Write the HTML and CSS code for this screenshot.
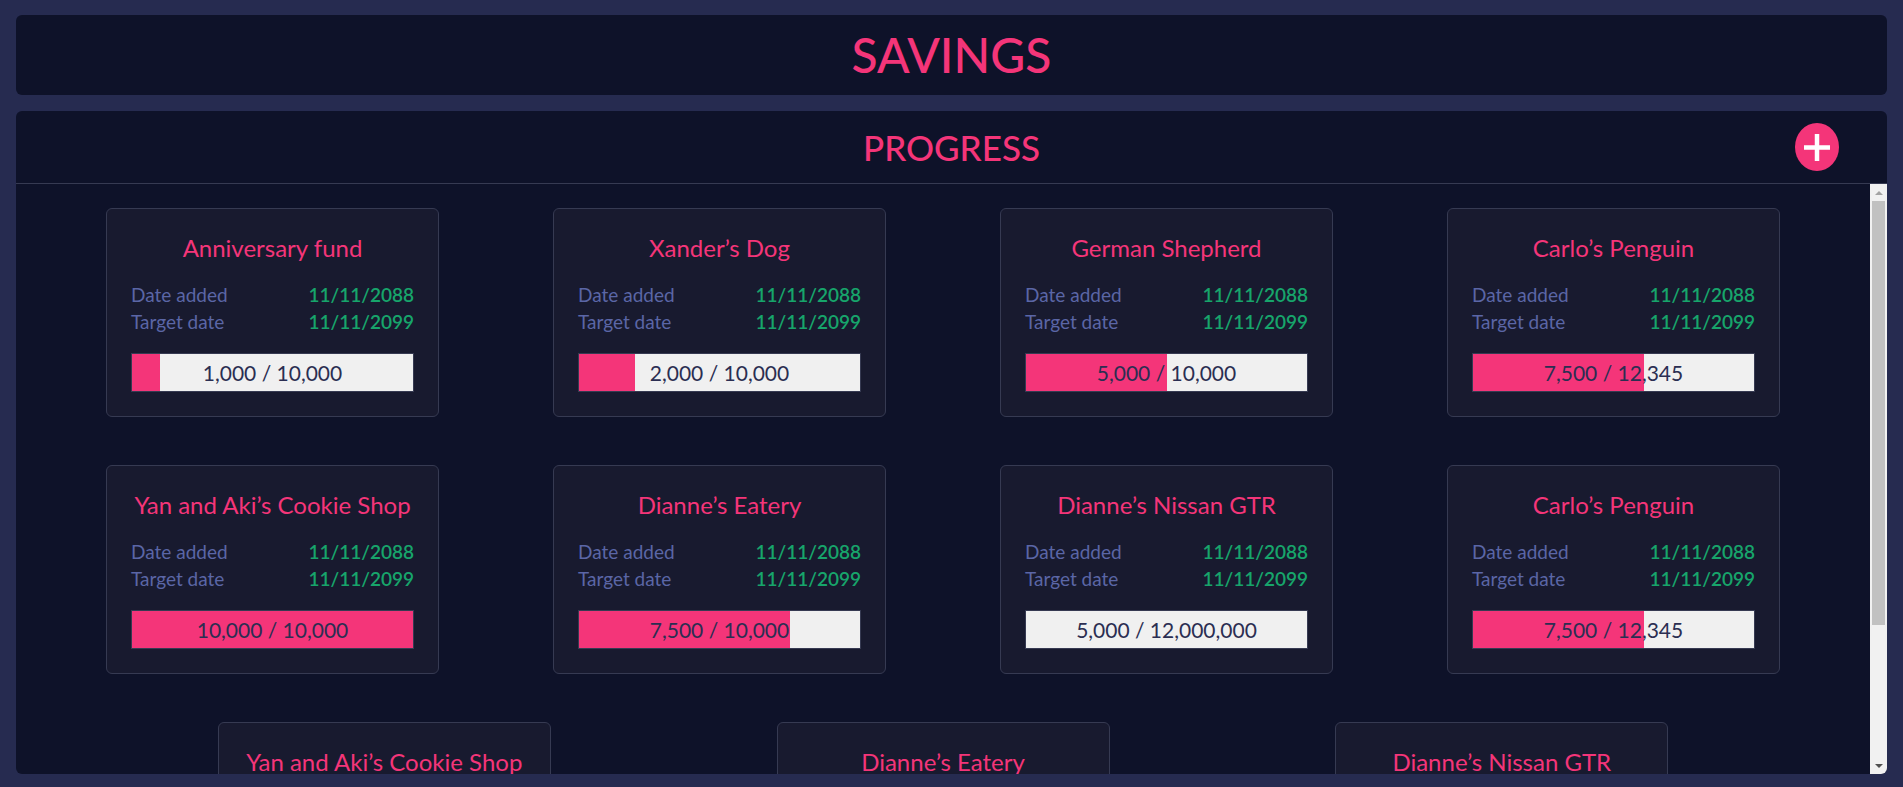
FILE: index.html
```html
<!DOCTYPE html>
<html lang="en">
<head>
<meta charset="utf-8">
<title>Savings</title>
<link rel="stylesheet" href="styles.css">
</head>
<body>
<div class="app">
  <header class="top">
    <h1 class="brand">SAVINGS</h1>
  </header>
  <section class="main">
    <div class="main-head">
      <h2 class="section-title">PROGRESS</h2>
      <button class="add" type="button" aria-label="Add">
        <svg width="26" height="27" viewBox="0 0 26 27"><path d="M13 0V27M0 13.5H26" stroke="#fff" stroke-width="4.5" fill="none"/></svg>
      </button>
    </div>
    <div class="main-body">
    <div class="scroll">
      <div class="cards">
        <div class="card">
          <h3 class="card-title">Anniversary fund</h3>
          <div class="row"><span class="label">Date added</span><span class="date">11/11/2088</span></div>
          <div class="row"><span class="label">Target date</span><span class="date">11/11/2099</span></div>
          <div class="bar"><div class="fill" style="width:10%"></div><div class="amount">1,000 / 10,000</div></div>
        </div>
        <div class="card">
          <h3 class="card-title">Xander’s Dog</h3>
          <div class="row"><span class="label">Date added</span><span class="date">11/11/2088</span></div>
          <div class="row"><span class="label">Target date</span><span class="date">11/11/2099</span></div>
          <div class="bar"><div class="fill" style="width:20%"></div><div class="amount">2,000 / 10,000</div></div>
        </div>
        <div class="card">
          <h3 class="card-title">German Shepherd</h3>
          <div class="row"><span class="label">Date added</span><span class="date">11/11/2088</span></div>
          <div class="row"><span class="label">Target date</span><span class="date">11/11/2099</span></div>
          <div class="bar"><div class="fill" style="width:50%"></div><div class="amount">5,000 / 10,000</div></div>
        </div>
        <div class="card">
          <h3 class="card-title">Carlo’s Penguin</h3>
          <div class="row"><span class="label">Date added</span><span class="date">11/11/2088</span></div>
          <div class="row"><span class="label">Target date</span><span class="date">11/11/2099</span></div>
          <div class="bar"><div class="fill" style="width:60.75%"></div><div class="amount">7,500 / 12,345</div></div>
        </div>
        <div class="card">
          <h3 class="card-title">Yan and Aki’s Cookie Shop</h3>
          <div class="row"><span class="label">Date added</span><span class="date">11/11/2088</span></div>
          <div class="row"><span class="label">Target date</span><span class="date">11/11/2099</span></div>
          <div class="bar"><div class="fill" style="width:100%"></div><div class="amount">10,000 / 10,000</div></div>
        </div>
        <div class="card">
          <h3 class="card-title">Dianne’s Eatery</h3>
          <div class="row"><span class="label">Date added</span><span class="date">11/11/2088</span></div>
          <div class="row"><span class="label">Target date</span><span class="date">11/11/2099</span></div>
          <div class="bar"><div class="fill" style="width:75%"></div><div class="amount">7,500 / 10,000</div></div>
        </div>
        <div class="card">
          <h3 class="card-title">Dianne’s Nissan GTR</h3>
          <div class="row"><span class="label">Date added</span><span class="date">11/11/2088</span></div>
          <div class="row"><span class="label">Target date</span><span class="date">11/11/2099</span></div>
          <div class="bar"><div class="fill" style="width:0%"></div><div class="amount">5,000 / 12,000,000</div></div>
        </div>
        <div class="card">
          <h3 class="card-title">Carlo’s Penguin</h3>
          <div class="row"><span class="label">Date added</span><span class="date">11/11/2088</span></div>
          <div class="row"><span class="label">Target date</span><span class="date">11/11/2099</span></div>
          <div class="bar"><div class="fill" style="width:60.75%"></div><div class="amount">7,500 / 12,345</div></div>
        </div>
        <div class="card">
          <h3 class="card-title">Yan and Aki’s Cookie Shop</h3>
          <div class="row"><span class="label">Date added</span><span class="date">11/11/2088</span></div>
          <div class="row"><span class="label">Target date</span><span class="date">11/11/2099</span></div>
          <div class="bar"><div class="fill" style="width:100%"></div><div class="amount">10,000 / 10,000</div></div>
        </div>
        <div class="card">
          <h3 class="card-title">Dianne’s Eatery</h3>
          <div class="row"><span class="label">Date added</span><span class="date">11/11/2088</span></div>
          <div class="row"><span class="label">Target date</span><span class="date">11/11/2099</span></div>
          <div class="bar"><div class="fill" style="width:75%"></div><div class="amount">7,500 / 10,000</div></div>
        </div>
        <div class="card">
          <h3 class="card-title">Dianne’s Nissan GTR</h3>
          <div class="row"><span class="label">Date added</span><span class="date">11/11/2088</span></div>
          <div class="row"><span class="label">Target date</span><span class="date">11/11/2099</span></div>
          <div class="bar"><div class="fill" style="width:0%"></div><div class="amount">5,000 / 12,000,000</div></div>
        </div>
      </div>
    </div>
    <div class="scrollbar" aria-hidden="true">
      <div class="sb-btn"><span class="arrow-up"></span></div>
      <div class="sb-track"><div class="sb-thumb"></div></div>
      <div class="sb-btn"><span class="arrow-down"></span></div>
    </div>
    </div>
  </section>
</div>
</body>
</html>
```
FILE: styles.css
```css
html, body {
  margin: 0;
  padding: 0;
}
body {
  background: #262b50;
  font-family: "Lato", "Open Sans", sans-serif;
  color: #f43579;
}
.app {
  height: 100vh;
  box-sizing: border-box;
  padding: 15px 16px 13px;
  display: flex;
  flex-direction: column;
  gap: 16px;
}
.top {
  height: 80px;
  flex: none;
  background: #0e1229;
  border-radius: 6px;
  display: flex;
  align-items: center;
  justify-content: center;
}
.brand {
  margin: 0;
  font-size: 48px;
  font-weight: 500;
  line-height: 1;
  color: #f43579;
}
.main {
  flex: 1;
  min-height: 0;
  display: flex;
  flex-direction: column;
  background: #0e1229;
  border-radius: 6px;
  overflow: hidden;
}
.main-head {
  height: 72px;
  flex: none;
  border-bottom: 1px solid #363a52;
  display: flex;
  align-items: center;
  justify-content: center;
  position: relative;
}
.section-title {
  margin: 0;
  font-size: 35px;
  font-weight: 500;
  line-height: 1;
  color: #f43579;
}
.add {
  position: absolute;
  right: 48px;
  top: 12px;
  width: 44px;
  height: 48px;
  padding: 0;
  border: 0;
  border-radius: 50%;
  background: #f43579;
  display: grid;
  place-items: center;
  cursor: pointer;
}
.add svg {
  display: block;
}
.main-body {
  flex: 1;
  min-height: 0;
  display: flex;
}
.scroll {
  flex: 1;
  min-width: 0;
  overflow: hidden;
}
.scrollbar {
  width: 17px;
  flex: none;
  background: #f1f1f1;
  display: flex;
  flex-direction: column;
}
.sb-btn {
  height: 17px;
  flex: none;
  display: flex;
  align-items: center;
  justify-content: center;
}
.arrow-up {
  width: 0;
  height: 0;
  border-left: 4px solid transparent;
  border-right: 4px solid transparent;
  border-bottom: 4px solid #a3a3a3;
}
.arrow-down {
  width: 0;
  height: 0;
  border-left: 4px solid transparent;
  border-right: 4px solid transparent;
  border-top: 4px solid #505050;
}
.sb-track {
  flex: 1;
  padding: 0 2px;
}
.sb-thumb {
  height: 424px;
  background: #c1c1c1;
}
.cards {
  display: flex;
  flex-wrap: wrap;
  justify-content: space-evenly;
}
.card {
  width: 333px;
  box-sizing: border-box;
  margin: 24px;
  padding: 24px;
  border: 1px solid #363a52;
  border-radius: 6px;
  background: #181a2f;
}
.card-title {
  margin: 0 0 18px;
  font-size: 24px;
  line-height: 30px;
  font-weight: 400;
  text-align: center;
  color: #f43579;
}
.row {
  display: flex;
  justify-content: space-between;
  font-size: 19px;
  line-height: 27px;
}
.label {
  color: #5b66a6;
}
.date {
  color: #17a56b;
  font-weight: 600;
}
.bar {
  margin-top: 18px;
  height: 39px;
  box-sizing: border-box;
  border: 1px solid #363a52;
  background: #f0f0f0;
  display: grid;
}
.fill {
  grid-area: 1 / 1;
  background: #f43579;
  height: 100%;
}
.amount {
  grid-area: 1 / 1;
  text-align: center;
  font-size: 21px;
  line-height: 37px;
  color: #2b2e52;
}
```
